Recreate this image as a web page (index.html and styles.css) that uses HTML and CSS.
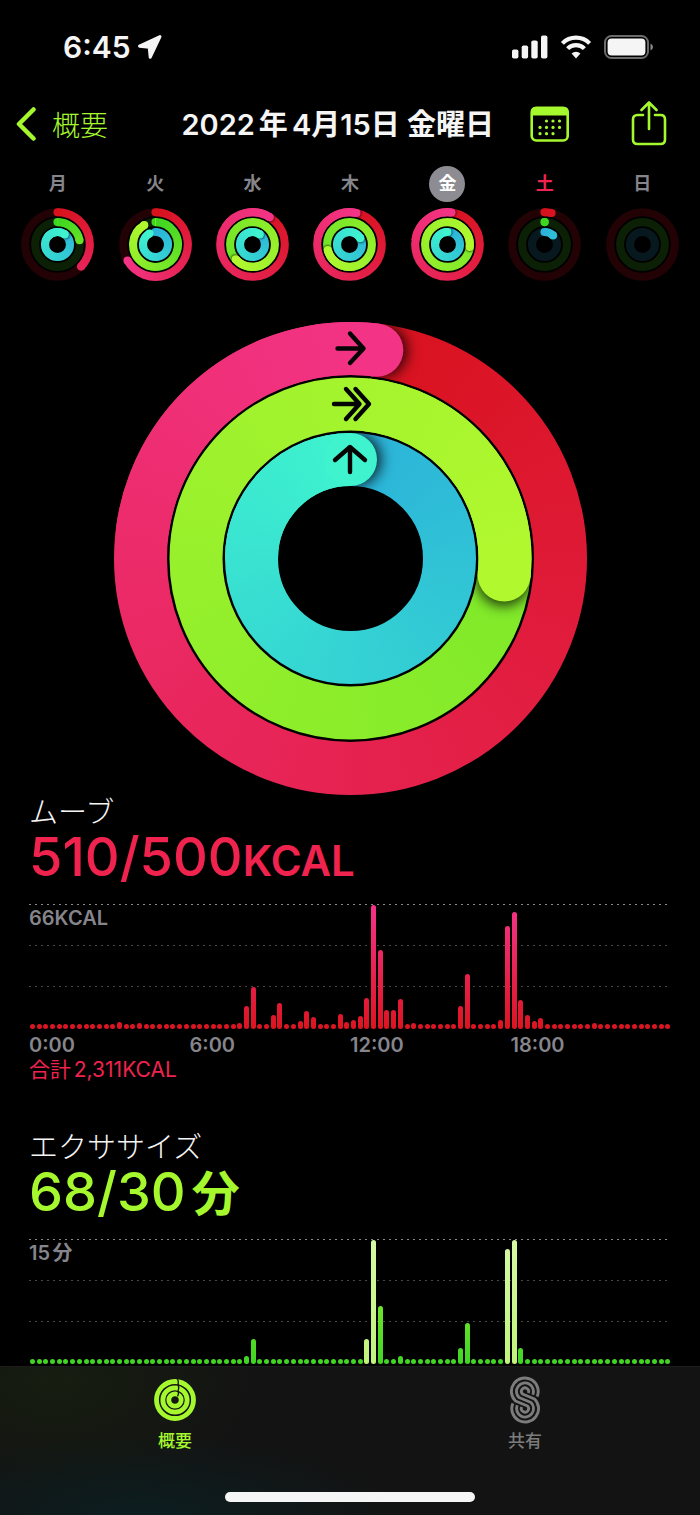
FILE: index.html
```html
<!DOCTYPE html>
<html lang="ja">
<head>
    <meta charset="UTF-8">
    <meta name="viewport" content="width=device-width, initial-scale=1">
    <title>アクティビティ</title>
    <link rel="stylesheet" href="styles.css">
</head>
<body>
    <!-- Status Bar -->
    <div class="status-bar">
        <span class="clock">6:45</span>
        <svg class="location" width="26" height="26" viewBox="0 0 26 26">
            <path d="M23 2.5 L2.5 12.2 L12.2 13.2 L13.2 23.3 Z" fill="#f5f5f5" stroke="#f5f5f5" stroke-width="3" stroke-linejoin="round"/>
        </svg>
        <div class="status-icons">
            <svg width="36" height="24" viewBox="0 0 36 24" fill="#f5f5f5">
                <rect x="0" y="14.5" width="6.4" height="9" rx="1.8"/>
                <rect x="9.7" y="10.5" width="6.4" height="13" rx="1.8"/>
                <rect x="19.3" y="5.5" width="6.4" height="18" rx="1.8"/>
                <rect x="29" y="0.5" width="6.4" height="23" rx="1.8"/>
            </svg>
            <svg width="32" height="24" viewBox="0 0 32 24" fill="none" stroke="#f5f5f5" stroke-width="4.2">
                <path d="M2.4 8.4 A19 19 0 0 1 29.6 8.4"/>
                <path d="M7.6 13.6 A11.8 11.8 0 0 1 24.4 13.6"/>
                <path d="M16 23.5 L11.6 18.6 A6.4 6.4 0 0 1 20.4 18.6 Z" fill="#f5f5f5" stroke="none"/>
            </svg>
            <svg width="50" height="24" viewBox="0 0 50 24">
                <rect x="1" y="1" width="43" height="22" rx="6.5" fill="none" stroke="#6b6b6e" stroke-width="2"/>
                <rect x="3.6" y="3.6" width="37.8" height="16.8" rx="4" fill="#f5f5f5"/>
                <path d="M46.5 8.5 Q49 9.5 49 12 Q49 14.5 46.5 15.5 Z" fill="#8a8a8d"/>
            </svg>
        </div>
    </div>

    <!-- Header Section -->
    <header class="header">
        <a href="#" class="back">
            <svg width="20" height="34" viewBox="0 0 20 34" fill="none" stroke="currentColor" stroke-width="4.5" stroke-linecap="round" stroke-linejoin="round">
                <path d="M17.5 2.5 L3 17 L17.5 31.5"/>
            </svg>
            概要
        </a>
        <h1>2022<span class="gap"> </span>年<span class="gap"> </span>4月15日 金曜日</h1>
        <div class="actions">
            <button type="button" aria-label="カレンダー">
                <svg width="40" height="46" viewBox="0 0 40 46">
                    <rect x="1.7" y="6.7" width="36" height="32.8" rx="4.5" fill="none" stroke="#a6f82e" stroke-width="2.6"/>
                    <path d="M1 14.5 V11 Q1 6 6 6 H33.5 Q38.5 6 38.5 11 V14.5 Z" fill="#a6f82e"/>
                    <g fill="#a6f82e">
                        <circle cx="16.5" cy="20" r="1.6"/><circle cx="23" cy="20" r="1.6"/><circle cx="29.5" cy="20" r="1.6"/>
                        <circle cx="10" cy="26.4" r="1.6"/><circle cx="16.5" cy="26.4" r="1.6"/><circle cx="23" cy="26.4" r="1.6"/><circle cx="29.5" cy="26.4" r="1.6"/>
                        <circle cx="10" cy="32.7" r="1.6"/><circle cx="16.5" cy="32.7" r="1.6"/><circle cx="23" cy="32.7" r="1.6"/>
                    </g>
                </svg>
            </button>
            <button type="button" aria-label="共有">
                <svg width="36" height="46" viewBox="0 0 36 46" fill="none" stroke="#a6f82e" stroke-width="2.6" stroke-linecap="round" stroke-linejoin="round">
                    <path d="M12 14 H6.5 Q2 14 2 18.5 V38.5 Q2 43 6.5 43 H29.5 Q34 43 34 38.5 V18.5 Q34 14 29.5 14 H24"/>
                    <path d="M18 28 V1.5 M10.5 9 L18 1.5 L25.5 9"/>
                </svg>
            </button>
        </div>
    </header>

    <!-- Week Strip -->
    <div class="week" id="week"></div>

    <main>
        <!-- Today's Rings -->
        <div class="rings" id="rings"></div>

        <!-- Move -->
        <section class="metric move">
            <h2>ムーブ</h2>
            <p class="value">510/500<span class="unit">KCAL</span></p>
            <div class="chart" id="move-chart"><span class="scale">66KCAL</span></div>
            <div class="axis"><span>0:00</span><span>6:00</span><span>12:00</span><span>18:00</span></div>
            <p class="total">合計<span class="gap"> </span>2,311KCAL</p>
        </section>

        <!-- Exercise -->
        <section class="metric exercise">
            <h2>エクササイズ</h2>
            <p class="value">68/30<span class="unit kanji">分</span></p>
            <div class="chart" id="exercise-chart"><span class="scale">15<span class="gap"> </span>分</span></div>
        </section>
    </main>

    <!-- Tab Bar -->
    <nav class="tab-bar">
        <div class="tabs">
            <a href="#" class="tab active">
                <svg width="42" height="48" viewBox="-21 -24 42 48" fill="none" stroke="#a6f82e" stroke-width="4.8">
                    <circle r="18.5"/>
                    <circle r="12.2"/>
                    <circle r="6.2"/>
                    <path d="M2 -22 Q4.2 -18.5 3.2 -15.5 Q4.2 -12 3.2 -9.5 Q4 -6 2.5 -3.6" stroke="#12160f" stroke-width="1.4"/>
                </svg>
                概要
            </a>
            <a href="#" class="tab">
                <svg width="32" height="48" viewBox="-16 -24 32 48" fill="none" stroke="#7c7c7c" stroke-width="2.9" stroke-linejoin="round">
                    <path d="M12.1 -3.3 A13.4 13.4 0 1 0 -9.5 1 L2.5 6 A3.6 3.6 0 1 1 -3.3 7"/>
                    <path d="M7.8 -5.3 A8.5 8.5 0 1 0 -6 -2.5 L6 2.5 A8.5 8.5 0 1 1 -7.8 5.3"/>
                    <path d="M3.3 -7 A3.6 3.6 0 1 0 -2.5 -6 L9.5 -1 A13.4 13.4 0 1 1 -12.1 3.3"/>
                </svg>
                共有
            </a>
        </div>
        <div class="home-indicator"></div>
    </nav>

    <script>
        // start colour, end colour and track colour of each ring, outermost first
        const ringColors = [
            { from: [216, 17, 28], to: [243, 52, 134], track: '#220204' },
            { from: [62, 214, 33], to: [178, 248, 47], track: '#0b2004' },
            { from: [43, 178, 217], to: [62, 243, 206], track: '#07191f' }
        ];

        // 1 = goal reached, anything above goes round again
        const week = [
            { day: '月', rings: [0.37, 0.22, 1.1] },
            { day: '火', rings: [0.667, 0.916, 0.92] },
            { day: '水', rings: [1.09, 1.636, 1.1] },
            { day: '木', rings: [1.035, 1.71, 1.165] },
            { day: '金', rings: [1.02, 2.267, 1], state: 'selected' },
            { day: '土', rings: [0.035, 0.002, 0.12], state: 'today' },
            { day: '日', rings: [0, 0, 0] }
        ];

        let maskId = 0;

        function mix(color, t) {
            return 'rgb(' + color.from.map((c, i) => Math.round(c + (color.to[i] - c) * t)).join(',') + ')';
        }

        function point(r, turn) {
            const a = turn * Math.PI * 2;
            return [(r * Math.sin(a)).toFixed(3), (-r * Math.cos(a)).toFixed(3)];
        }

        // Whatever is passed in is only shown inside the masking shape
        function masked(shape, content) {
            const id = 'mask' + (maskId++);
            return `<mask id="${id}" maskUnits="userSpaceOnUse" x="-300" y="-300" width="600" height="600">${shape}</mask><g mask="url(#${id})">${content}</g>`;
        }

        function drawRing(r, width, total, color) {
            const band = stroke => `<circle r="${r}" fill="none" stroke="${stroke}" stroke-width="${width}"/>`;
            const arc = (start, end) => {
                const large = end - start > 0.5 ? 1 : 0;
                return `<path d="M${point(r, start)} A${r} ${r} 0 ${large} 1 ${point(r, end)}" fill="none" stroke="#fff" stroke-width="${width}"/>`;
            };
            if (total <= 0) return band(color.track);

            const half = width / 2;
            const box = r + width;
            const head = Math.min(1, total * 1.5);
            const [hx, hy] = point(r, total);
            const gradient = total < 1
                ? `conic-gradient(${mix(color, 0)}, ${mix(color, head)} ${total * 100}%)`
                : `conic-gradient(from ${total * 360}deg, ${mix(color, (total - 1) / total)}, ${mix(color, 1)})`;
            const fill = `<foreignObject x="${-box}" y="${-box}" width="${box * 2}" height="${box * 2}"><div class="sweep" style="background: ${gradient}"></div></foreignObject>`;

            let out = '';
            if (total < 1) {
                out += band(color.track);
                out += `<circle cy="${-r}" r="${half}" fill="${mix(color, 0)}"/>`;
                out += masked(arc(0, total), fill);
            } else {
                out += masked(band('#fff'), fill);
            }

            // shadow under the head of the ring, kept inside its band
            if (total >= 1) {
                const [sx, sy] = point(r, total + width * 0.012 / r);
                out += masked(band('#fff'), `<circle cx="${sx}" cy="${sy}" r="${half}" fill="#000" fill-opacity="0.8" style="filter: blur(${width * 0.12}px)"/>`);
                out += masked(arc(total - 0.25, total), fill);
            }
            out += `<circle cx="${hx}" cy="${hy}" r="${half}" fill="${mix(color, head)}"/>`;
            return out;
        }

        function drawRings(values, radii, width, size, extra) {
            const rings = values.map((v, i) => drawRing(radii[i], width, v, ringColors[i])).join('');
            return `<svg viewBox="${-size / 2} ${-size / 2} ${size} ${size}">${rings}${extra || ''}</svg>`;
        }

        // Week strip
        document.getElementById('week').innerHTML = week.map(d => `
            <a href="#" class="day ${d.state || ''}">
                <span class="day-name">${d.day}</span>
                ${drawRings(d.rings, [32.3, 22.4, 12.5], 8.1, 73)}
            </a>
        `).join('');

        // Big rings with arrows
        const arrows = `
            <g fill="none" stroke="#050505" stroke-width="4.4" stroke-linecap="round" stroke-linejoin="round">
                <path d="M-13 -210 H13 M-0.5 -225 L13 -210 L-0.5 -195.5"/>
                <path d="M-16.5 -154.5 H8.5 M-4.5 -169.5 L9 -154.5 L-4.5 -139.5 M5 -169.5 L18.5 -154.5 L5 -139.5"/>
                <path d="M-0.5 -86.5 V-111 M-15.5 -98.5 L-0.5 -111.5 L14.5 -98.5"/>
            </g>`;
        document.getElementById('rings').innerHTML = drawRings(week[4].rings, [210, 154.5, 99], 53, 473, arrows);

        // Charts: one bar for each 15 minutes, only the slots above zero are listed
        const moveBars = {
            13: 7, 16: 6, 31: 6, 32: 23, 33: 42, 36: 14, 37: 26, 40: 8, 41: 18, 42: 12,
            46: 15, 47: 7, 48: 9, 49: 13, 50: 31, 51: 124, 52: 79, 53: 19, 54: 19, 55: 30,
            57: 6, 64: 23, 65: 55, 70: 9, 71: 103, 72: 117, 73: 29, 74: 14, 75: 8, 76: 11, 84: 6
        };
        const exerciseBars = { 32: 8, 33: 25, 50: 25, 51: 124, 52: 58, 55: 8, 64: 16, 65: 41, 71: 115, 72: 124, 73: 16 };
        const workoutSlots = [50, 51, 71, 72];

        function drawChart(id, bars, highlight) {
            const chart = document.getElementById(id);
            for (let i = 0; i < 96; i++) {
                const bar = document.createElement('i');
                bar.className = highlight.includes(i) ? 'bar workout' : 'bar';
                if (bars[i]) bar.style.height = bars[i] + 'px';
                chart.appendChild(bar);
            }
        }

        drawChart('move-chart', moveBars, []);
        drawChart('exercise-chart', exerciseBars, workoutSlots);
    </script>
</body>
</html>
```
FILE: styles.css
```css
* {
    box-sizing: border-box;
    margin: 0;
    padding: 0;
}

body {
    font-family: Inter, "Noto Sans CJK JP", sans-serif;
    background: #000;
    color: #f5f5f5;
    min-height: 100vh;
    display: flex;
    flex-direction: column;
}

a {
    color: inherit;
    text-decoration: none;
}

svg {
    display: block;
}

.gap {
    font-size: 16px;
}

/* Status Bar */
.status-bar {
    display: flex;
    align-items: center;
    height: 46px;
    margin-top: 24px;
    padding: 0 46px 0 63px;
}

.clock {
    font-size: 30px;
    font-weight: 600;
}

.location {
    margin-left: 6px;
}

.status-icons {
    display: flex;
    align-items: center;
    gap: 12px;
    margin-left: auto;
}

/* Header */
.header {
    display: flex;
    align-items: center;
    height: 46px;
    margin-top: 31px;
    padding: 0 33px 0 16px;
}

.back {
    display: flex;
    align-items: center;
    gap: 16px;
    font-size: 28px;
    font-weight: 300;
    color: #a6f82e;
}

.header h1 {
    margin-left: auto;
    font-size: 29px;
    font-weight: 600;
    line-height: 46px;
    padding-top: 6px;
    white-space: nowrap;
}

.actions {
    display: flex;
    gap: 61px;
    margin-left: 36px;
}

.actions button {
    background: none;
    border: none;
    cursor: pointer;
}

/* Week Strip */
.week {
    display: grid;
    grid-template-columns: repeat(7, 1fr);
    margin-top: 19px;
    padding: 0 9px;
}

.day {
    display: flex;
    flex-direction: column;
    align-items: center;
    gap: 6px;
}

.day svg {
    width: 73px;
}

.day-name {
    width: 36px;
    height: 36px;
    border-radius: 50%;
    font-size: 18px;
    font-weight: 600;
    line-height: 36px;
    text-align: center;
    color: #85858b;
}

.selected .day-name {
    background: #8c8c92;
    color: #fff;
}

.today .day-name {
    color: #f0234f;
}

/* Rings */
main {
    flex: 1;
}

.rings {
    max-width: 473px;
    margin: 41px auto 0;
}

.sweep {
    height: 100%;
}

/* Metrics */
.metric {
    padding: 0 29px;
    margin-bottom: 44px;
}

.exercise {
    margin-bottom: 2px;
}

.metric h2 {
    font-size: 29px;
    font-weight: 300;
    line-height: 36px;
}

.value {
    display: flex;
    align-items: baseline;
    height: 52px;
    font-size: 54px;
    font-weight: 500;
    line-height: 52px;
}

.unit {
    font-size: 42px;
    font-weight: 600;
    line-height: 42px;
}

.kanji {
    margin-left: 6px;
    font-size: 48px;
}

.move .value,
.move .total {
    color: #f0234f;
}

.exercise .value {
    color: #a6f82e;
}

/* Charts */
.chart {
    --dot: #484848;
    position: relative;
    display: flex;
    align-items: flex-end;
    justify-content: space-between;
    height: 125px;
    margin-top: 21px;
    padding-left: 1px;
    background:
        repeating-linear-gradient(90deg, #8a8a8a 0 2px, #000 2px 6px) 0 0 / 100% 1px no-repeat,
        repeating-linear-gradient(90deg, var(--dot) 0 2px, #000 2px 6px) 0 41px / 100% 1px no-repeat,
        repeating-linear-gradient(90deg, var(--dot) 0 2px, #000 2px 6px) 0 82px / 100% 1px no-repeat;
}

.scale {
    position: absolute;
    top: 2px;
    left: 0;
    font-size: 20px;
    font-weight: 600;
    line-height: 24px;
    color: #85858b;
}

.scale .gap {
    font-size: 10px;
}

.bar {
    width: 5px;
    height: 5px;
    border-radius: 3px;
    background: linear-gradient(to top, #dc1420, #f7328a) bottom / 100% 124px;
}

.exercise .bar {
    background-image: linear-gradient(to top, #3fd424, #a6f82e);
}

.exercise .workout {
    background-image: linear-gradient(to top, #c0f47a, #d6f8a4);
}

.axis {
    display: grid;
    grid-template-columns: repeat(4, 1fr);
    margin-top: 4px;
    font-size: 20px;
    font-weight: 600;
    line-height: 24px;
    color: #85858b;
}

.total {
    font-size: 21px;
    line-height: 26px;
}

.total .gap {
    font-size: 10px;
}

/* Tab Bar */
.tab-bar {
    flex-shrink: 0;
    height: 150px;
    padding: 9px 0 14px;
    display: flex;
    flex-direction: column;
    justify-content: space-between;
    align-items: center;
    border-top: 1px solid #1c1c1c;
    background:
        radial-gradient(ellipse 260px 80px at 20% 100%, #0c1e20, transparent),
        radial-gradient(ellipse 200px 120px at 8% 10%, #161d10, transparent),
        #131313;
}

.tabs {
    display: flex;
    width: 100%;
}

.tab {
    flex: 1;
    display: flex;
    flex-direction: column;
    align-items: center;
    gap: 5px;
    font-size: 17px;
    font-weight: 500;
    line-height: 24px;
    color: #7c7c7c;
}

.active {
    color: #a6f82e;
}

.home-indicator {
    width: 250px;
    height: 10px;
    border-radius: 5px;
    background: #f5f5f5;
}
```
